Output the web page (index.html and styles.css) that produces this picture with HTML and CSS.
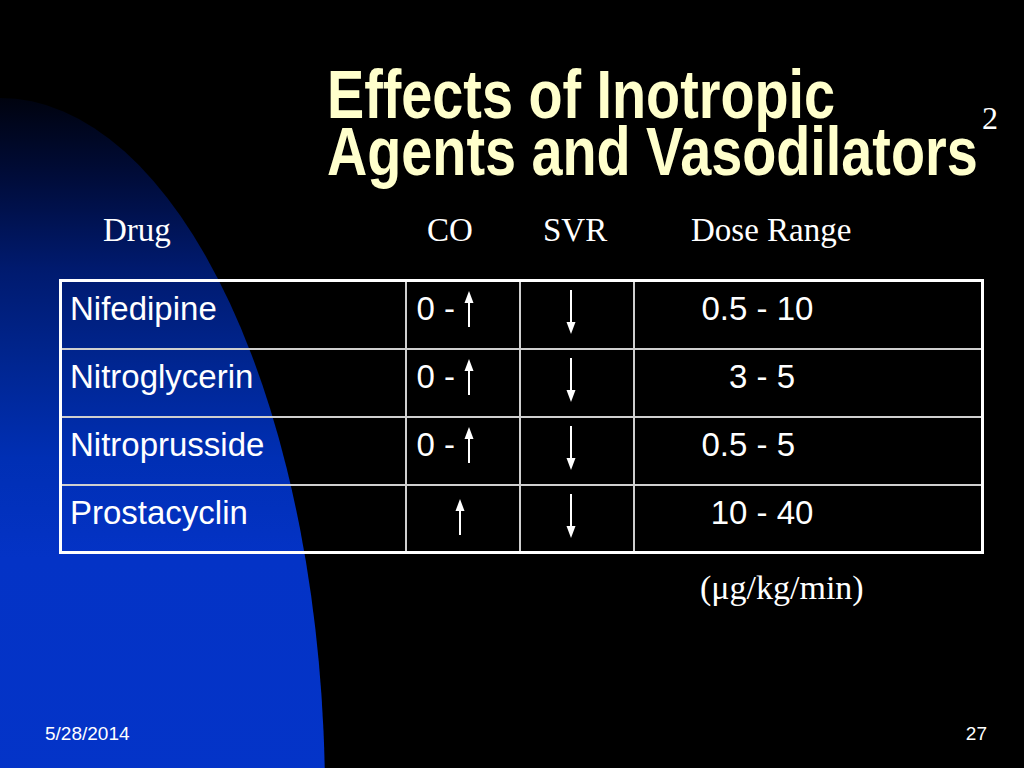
FILE: index.html
```html
<!DOCTYPE html>
<html>
<head>
<meta charset="utf-8">
<link rel="stylesheet" href="styles.css">
</head>
<body>
<div class="slide">
  <div class="blob"></div>
  <div class="content">
    <div class="title-row">
      <h1 class="title"><span class="title-line">Effects of Inotropic</span><br><span class="title-line">Agents and Vasodilators</span></h1>
      <span class="title-note">2</span>
    </div>
    <div class="col-heads">
      <span>Drug</span>
      <span>CO</span>
      <span>SVR</span>
      <span>Dose Range</span>
    </div>
    <table class="drugs">
      <colgroup>
        <col class="c-drug"><col class="c-co"><col class="c-svr"><col class="c-dose">
      </colgroup>
      <tr>
        <td>Nifedipine</td>
        <td><div class="co">0 -<svg class="up" width="12" height="36" viewBox="0 0 12 36"><line x1="6" y1="9" x2="6" y2="36" stroke="#fff" stroke-width="2"/><polygon points="1.5,12 6,0 10.5,12" fill="#fff"/></svg></div></td>
        <td><div class="svr"><svg class="down" width="12" height="44" viewBox="0 0 12 44"><line x1="6" y1="0" x2="6" y2="34" stroke="#fff" stroke-width="2"/><polygon points="1.5,32 6,44 10.5,32" fill="#fff"/></svg></div></td>
        <td class="dose">0.5 - 10</td>
      </tr>
      <tr>
        <td>Nitroglycerin</td>
        <td><div class="co">0 -<svg class="up" width="12" height="36" viewBox="0 0 12 36"><line x1="6" y1="9" x2="6" y2="36" stroke="#fff" stroke-width="2"/><polygon points="1.5,12 6,0 10.5,12" fill="#fff"/></svg></div></td>
        <td><div class="svr"><svg class="down" width="12" height="44" viewBox="0 0 12 44"><line x1="6" y1="0" x2="6" y2="34" stroke="#fff" stroke-width="2"/><polygon points="1.5,32 6,44 10.5,32" fill="#fff"/></svg></div></td>
        <td class="dose">   3 - 5</td>
      </tr>
      <tr>
        <td>Nitroprusside</td>
        <td><div class="co">0 -<svg class="up" width="12" height="36" viewBox="0 0 12 36"><line x1="6" y1="9" x2="6" y2="36" stroke="#fff" stroke-width="2"/><polygon points="1.5,12 6,0 10.5,12" fill="#fff"/></svg></div></td>
        <td><div class="svr"><svg class="down" width="12" height="44" viewBox="0 0 12 44"><line x1="6" y1="0" x2="6" y2="34" stroke="#fff" stroke-width="2"/><polygon points="1.5,32 6,44 10.5,32" fill="#fff"/></svg></div></td>
        <td class="dose">0.5 - 5</td>
      </tr>
      <tr>
        <td>Prostacyclin</td>
        <td><div class="co co-only"><svg class="up" width="12" height="36" viewBox="0 0 12 36"><line x1="6" y1="9" x2="6" y2="36" stroke="#fff" stroke-width="2"/><polygon points="1.5,12 6,0 10.5,12" fill="#fff"/></svg></div></td>
        <td><div class="svr"><svg class="down" width="12" height="44" viewBox="0 0 12 44"><line x1="6" y1="0" x2="6" y2="34" stroke="#fff" stroke-width="2"/><polygon points="1.5,32 6,44 10.5,32" fill="#fff"/></svg></div></td>
        <td class="dose"> 10 - 40</td>
      </tr>
    </table>
    <div class="units">(&mu;g/kg/min)</div>
  </div>
  <div class="footer">
    <span>5/28/2014</span>
    <span>27</span>
  </div>
</div>
</body>
</html>
```

FILE: styles.css
```css
html, body {
  margin: 0;
  padding: 0;
  background: #000;
}

.slide {
  position: relative;
  width: 1024px;
  height: 768px;
  overflow: hidden;
  background: #000;
  color: #fff;
  display: flex;
  flex-direction: column;
}

.blob {
  position: absolute;
  left: -325px;
  top: 98px;
  width: 650px;
  height: 1400px;
  border-radius: 50%;
  background: linear-gradient(to bottom, #00030f 0px, #000c3a 80px, #001a6e 170px, #00258f 260px, #002fb4 360px, #0433c6 460px, #0434c8 700px);
}

.content {
  position: relative;
  flex: 1;
  display: flex;
  flex-direction: column;
}

.title-row {
  display: flex;
  align-items: flex-start;
  padding-left: 327px;
  padding-top: 66px;
}

.title {
  margin: 0;
  width: 650px;
  white-space: nowrap;
  font-family: "Liberation Sans", Arial, sans-serif;
  font-weight: bold;
  font-size: 68px;
  line-height: 57px;
  color: #ffffcc;
}

.title-line {
  display: inline-block;
  transform: scaleX(0.82);
  transform-origin: left center;
}

.title-note {
  font-family: "Liberation Serif", serif;
  font-size: 32px;
  line-height: 1;
  margin-top: 36px;
  margin-left: 5px;
}

.col-heads {
  display: grid;
  grid-template-columns: 324px 116px 148px auto;
  padding-left: 103px;
  margin-top: 30px;
  font-family: "Liberation Serif", serif;
  font-size: 33px;
  line-height: 40px;
}

.drugs {
  margin-left: 59px;
  margin-top: 29px;
  width: 922px;
  border-collapse: collapse;
  border: 3px solid #fff;
  font-family: "Liberation Sans", Arial, sans-serif;
  font-size: 33px;
  table-layout: fixed;
}

.c-drug { width: 345px; }
.c-co { width: 114px; }
.c-svr { width: 114px; }
.c-dose { width: 349px; }

.drugs td {
  border: 2px solid #cfcfcf;
  height: 68px;
  padding: 8px 0 0 8px;
  vertical-align: top;
  line-height: 38px;
  box-sizing: border-box;
}

.drugs td.dose {
  padding-left: 67px;
  white-space: pre;
}

.co {
  display: flex;
  align-items: flex-start;
  gap: 8px;
  padding-left: 2px;
}

.co .up {
  margin-top: 1px;
}

.co-only {
  padding-left: 39px;
}

.co-only .up {
  margin-top: 5px;
}

.svr {
  padding-left: 36px;
  padding-top: 0;
}

.svr svg, .co svg {
  display: block;
}

.units {
  font-family: "Liberation Serif", serif;
  font-size: 34px;
  line-height: 40px;
  padding-left: 700px;
  margin-top: 14px;
}

.footer {
  position: relative;
  display: flex;
  justify-content: space-between;
  padding: 0 37px 23px 45px;
  font-family: "Liberation Sans", Arial, sans-serif;
  font-size: 19px;
  line-height: 22px;
}
```
